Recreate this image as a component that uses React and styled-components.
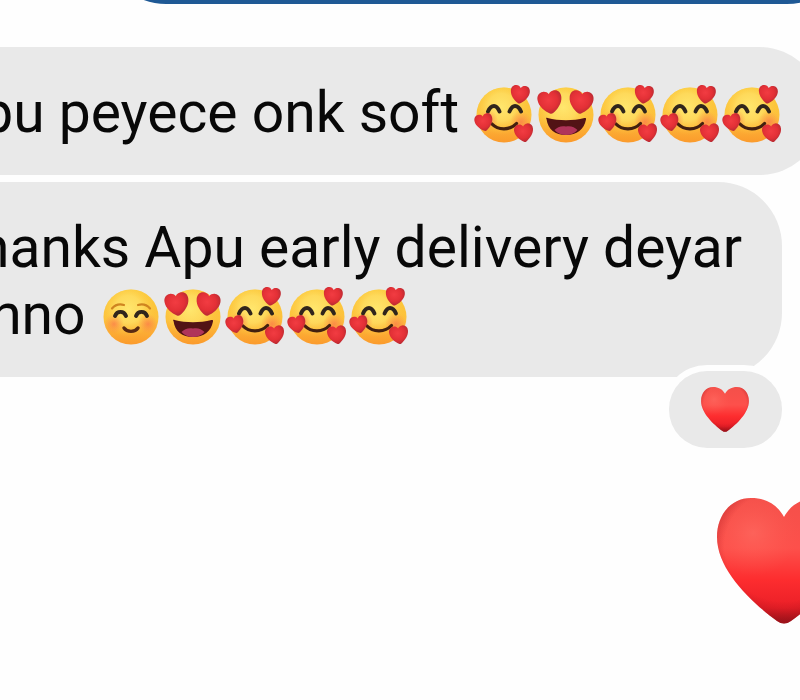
import styled, { createGlobalStyle } from "styled-components";

const GlobalStyle = createGlobalStyle`
  body {
    margin: 0;
    background: #fefefe;
    font-family: Roboto, "Liberation Sans", sans-serif;
  }
`;

const HEART =
  "M67 19C60 6 48 0 34 0C14 0 0 17 0 39C0 72 34 104 60 123Q67 128 74 123C100 104 134 72 134 39C134 17 120 0 100 0C86 0 74 6 67 19Z";

// rounder heart for the faces
const PLUMP_HEART =
  "M67 17C60 4 48 -1 35 -1C13 -1 -1 17 0 41C1 76 32 108 58 124Q67 129 76 124C102 108 133 76 134 41C135 17 121 -1 99 -1C86 -1 74 4 67 17Z";

const Screen = styled.main`
  min-height: 100vh;
  overflow: hidden;
`;

// the thread is wider than the window on both sides
const Thread = styled.div`
  display: flex;
  flex-direction: column;
  align-items: flex-start;
  gap: 7px;
  margin: -124px -51px 0 -96px;
`;

const SentBubble = styled.div`
  align-self: stretch;
  height: 128px;
  margin: 0 0 36px 198px;
  border-radius: 64px;
  background: #1f5995;
`;

const Bubble = styled.div`
  position: relative;
  padding: 32px 40px 29px;
  border-radius: ${(props) =>
    props.$last ? "12px 64px 64px 64px" : "64px 64px 64px 12px"};
  background: #e9e9e9;
  color: #080808;
  font-size: 57px;
  line-height: 67px;
  white-space: nowrap;
`;

const Text = styled.p`
  margin: 0;
`;

const Reaction = styled.button`
  position: absolute;
  right: 0;
  bottom: -71px;
  display: flex;
  align-items: center;
  justify-content: center;
  width: 113px;
  height: 77px;
  padding: 0;
  border: none;
  border-radius: 38px;
  background: #e9e9e9;
  box-shadow: 0 0 0 6px #fefefe;
  cursor: pointer;
`;

const SentLike = styled.div`
  display: flex;
  align-self: flex-end;
  margin-top: 114px;
`;

const EmojiSvg = styled.svg`
  width: 62px;
  height: 62px;
  vertical-align: -14px;
`;

const Defs = styled.svg`
  position: absolute;
  width: 0;
  height: 0;
`;

const Gradients = () => (
  <Defs aria-hidden="true">
    <defs>
      <linearGradient id="face" x1="0" y1="0" x2="0" y2="1">
        <stop offset="0" stopColor="#fbc93a" />
        <stop offset="0.55" stopColor="#fdc13c" />
        <stop offset="1" stopColor="#fb9a2c" />
      </linearGradient>
      <radialGradient id="shine" cx="0.45" cy="0.36" r="0.5">
        <stop offset="0" stopColor="#ffe76e" />
        <stop offset="0.5" stopColor="#ffe066" stopOpacity="0.75" />
        <stop offset="1" stopColor="#fdc83e" stopOpacity="0" />
      </radialGradient>
      <radialGradient id="blush">
        <stop offset="0" stopColor="#fb7a4a" stopOpacity="0.75" />
        <stop offset="1" stopColor="#fb8a4a" stopOpacity="0" />
      </radialGradient>
      <radialGradient id="love" cx="0.45" cy="0.4" r="0.62">
        <stop offset="0" stopColor="#f23c42" />
        <stop offset="0.6" stopColor="#e33036" />
        <stop offset="1" stopColor="#b42a32" />
      </radialGradient>
      <linearGradient id="heartBase" x1="0" y1="0" x2="0" y2="1">
        <stop offset="0" stopColor="#f4504a" />
        <stop offset="0.4" stopColor="#fd504b" />
        <stop offset="0.65" stopColor="#fd2d2f" />
        <stop offset="0.88" stopColor="#ea1f27" />
        <stop offset="1" stopColor="#ac141c" />
      </linearGradient>
      <radialGradient id="heartEdge" cx="0.5" cy="0.38" r="0.6">
        <stop offset="0.74" stopColor="#b0121a" stopOpacity="0" />
        <stop offset="1" stopColor="#8c1018" stopOpacity="0.55" />
      </radialGradient>
      <radialGradient id="heartGlow" cx="0.27" cy="0.28" r="0.34">
        <stop offset="0" stopColor="#ff6e64" stopOpacity="0.6" />
        <stop offset="1" stopColor="#ff5a50" stopOpacity="0" />
      </radialGradient>
    </defs>
  </Defs>
);

const Heart = ({ width, height }) => (
  <svg
    width={width}
    height={height}
    viewBox="0 0 134 126"
    role="img"
    aria-label="Red heart"
  >
    <path d={HEART} fill="url(#heartBase)" />
    <path d={HEART} fill="url(#heartGlow)" />
    <path d={HEART} fill="url(#heartEdge)" />
  </svg>
);

const MiniHeart = ({ x, y, size, tilt }) => (
  <path
    d={PLUMP_HEART}
    fill="url(#love)"
    transform={`translate(${x} ${y}) rotate(${tilt}) scale(${size / 134}) translate(-67 -63)`}
  />
);

const Emoji = ({ label, children }) => (
  <EmojiSvg viewBox="0 0 62 62" role="img" aria-label={label}>
    <circle cx="31" cy="31" r="27.5" fill="url(#face)" />
    <circle cx="31" cy="31" r="27.5" fill="url(#shine)" />
    {children}
  </EmojiSvg>
);

const Adore = () => (
  <Emoji label="Smiling face with hearts">
    <circle cx="15" cy="36" r="10" fill="url(#blush)" />
    <circle cx="48" cy="38" r="11" fill="url(#blush)" />
    <g fill="none" stroke="#30251c" strokeLinecap="round" strokeLinejoin="round">
      <path
        d="M15 27.5C16.5 24 19 22 21 22S25 24 26.5 27.5M36.5 27.5C38 24 40 22 42 22S46.5 24 48 27.5"
        strokeWidth="3.9"
      />
      <path d="M19 40C25 46.5 37 46.5 43.5 39.5" stroke="#43200f" strokeWidth="3.3" />
    </g>
    <MiniHeart x={47} y={10.5} size={19} tilt={6} />
    <MiniHeart x={11} y={38.5} size={18} tilt={-12} />
    <MiniHeart x={51} y={49} size={19} tilt={-8} />
  </Emoji>
);

const HeartEyes = () => (
  <Emoji label="Smiling face with heart eyes">
    <path
      d="M11.5 35C10.6 34.2 11.4 33.6 12.5 34C24 37 38 37 49.5 34C50.6 33.6 51.4 34.2 51 35.5C49 45.5 42 51 31 51S13 45.5 11.5 35Z"
      fill="#521315"
    />
    <path
      d="M19.5 46C22.5 42.5 27 41.5 31 42.5C35 41.5 39.5 42.5 42.5 46C39.5 49.5 35.5 51 31 51S22.5 49.5 19.5 46Z"
      fill="#b0345a"
    />
    <MiniHeart x={15} y={18.5} size={24} tilt={-8} />
    <MiniHeart x={46} y={18.5} size={24} tilt={8} />
  </Emoji>
);

const Blushing = () => (
  <Emoji label="Smiling face">
    <circle cx="14" cy="38" r="10" fill="url(#blush)" />
    <circle cx="48" cy="38" r="10" fill="url(#blush)" />
    <g fill="none" strokeLinecap="round">
      <path
        d="M12 22.5C15 19 19 17.5 24 19M38 19C43 17.5 47 19 50 22.5"
        stroke="#cf8420"
        strokeWidth="2.2"
      />
      <path
        d="M15 30C17 24.5 24 24.5 26 30M36 30C38 24.5 45 24.5 47 30"
        stroke="#30251c"
        strokeWidth="3.9"
      />
      <path d="M24 42C27 46.5 35 46.5 38 42" stroke="#5a2a12" strokeWidth="3.4" />
    </g>
  </Emoji>
);

const App = () => {
  return (
    <Screen>
      <GlobalStyle />
      <Gradients />
      <Thread>
        <SentBubble />
        <Bubble>
          <Text>
            Apu peyece onk soft <Adore />
            <HeartEyes />
            <Adore />
            <Adore />
            <Adore />
          </Text>
        </Bubble>
        <Bubble $last>
          <Text>
            Thanks Apu early delivery deyar
            <br />
            jonno <Blushing />
            <HeartEyes />
            <Adore />
            <Adore />
            <Adore />
          </Text>
          <Reaction type="button">
            <Heart width={48} height={45} />
          </Reaction>
        </Bubble>
        <SentLike>
          <Heart width={134} height={126} />
        </SentLike>
      </Thread>
    </Screen>
  );
};

export default App;
